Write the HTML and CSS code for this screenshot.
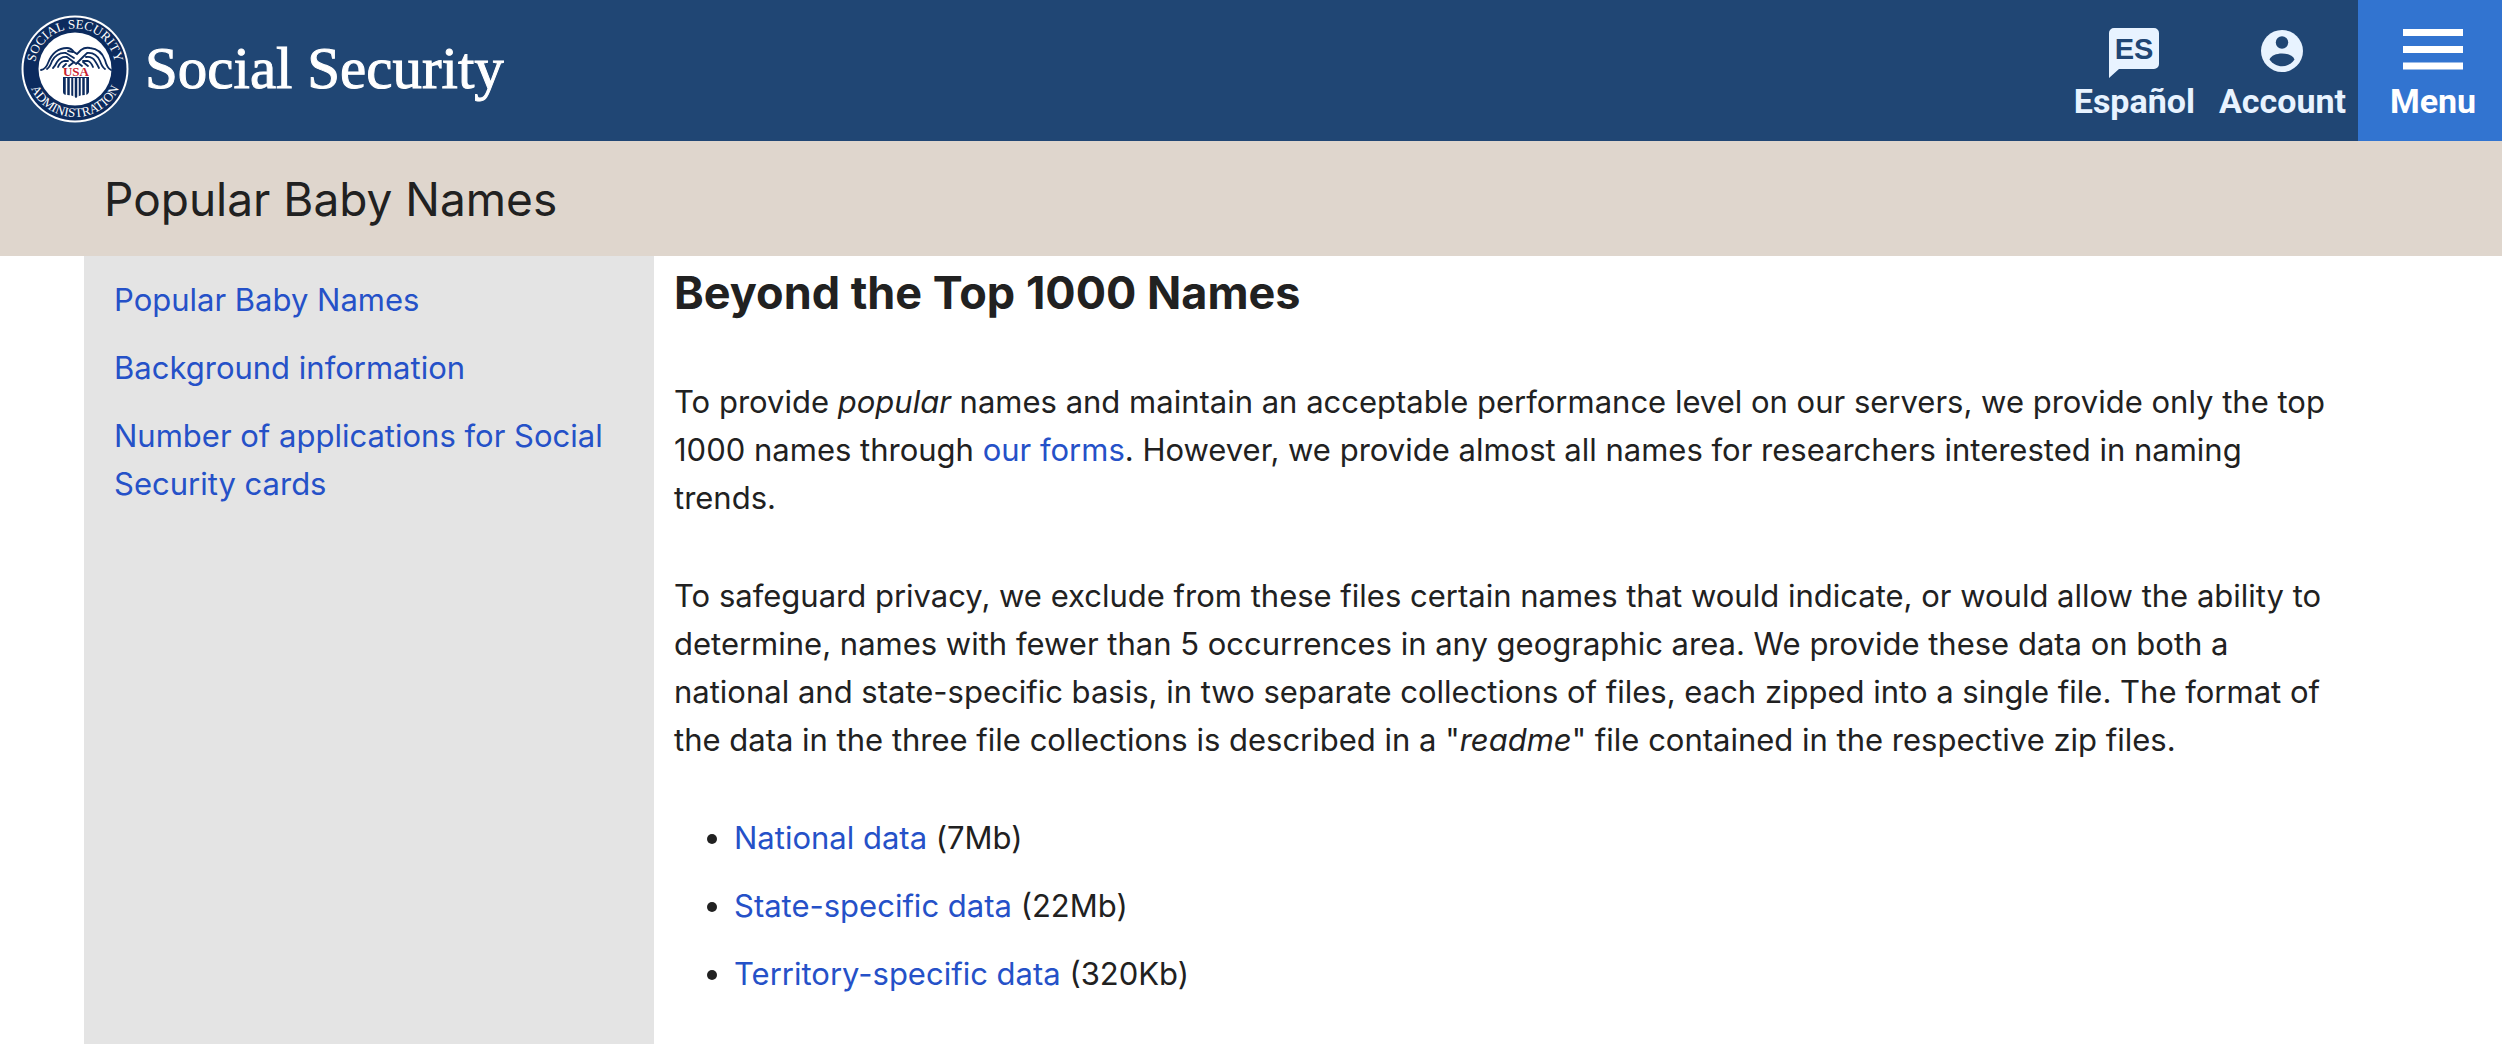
FILE: index.html
```html
<!DOCTYPE html>
<html lang="en">
<head>
<meta charset="utf-8">
<meta name="viewport" content="width=device-width, initial-scale=1">
<title>Beyond the Top 1000 Names</title>
<link rel="stylesheet" href="styles.css">
</head>
<body>
<header class="site-header">
  <a class="brand" href="#">
    <svg class="seal" viewBox="0 0 108 108" role="img" aria-label="Social Security Administration seal">
      <defs>
        <path id="arc-top" d="M13.500 54a40.500 40.500 0 0 1 81 0"/>
        <path id="arc-bottom" d="M6 54a48 48 0 0 0 96 0"/>
      </defs>
      <circle cx="54" cy="54" r="53.500" fill="#fff"/>
      <circle cx="54" cy="54" r="51.500" fill="#0c2b5e"/>
      <circle cx="54" cy="54" r="36.500" fill="#fff"/>
      <text class="seal-text"><textPath href="#arc-top" startOffset="50%" text-anchor="middle">SOCIAL SECURITY</textPath></text>
      <text class="seal-text"><textPath href="#arc-bottom" startOffset="50%" text-anchor="middle">ADMINISTRATION</textPath></text>
      <g fill="none" stroke="#0c2b5e" stroke-width="1.800" stroke-linecap="round">
        <path d="M20 55q5-1 7-7 6-15 19-15 4 0 7 4l3 2 4-4q4-3 9-2 11 1 15 12 2 8 6 10"/>
        <path d="M26 54q3-2 5-8 5-9 14-8l8 5M32 53q2-2 4-6 4-6 10-5l8 6M37 52q2-5 6-6l4 0M42 52l3-3M48 51l5-4"/>
        <path d="M84 54q-3-2-5-8-4-9-13-8l-4 4-7 7M78 53q-2-4-4-7-3-5-9-4M72 52q-2-5-5-6l-5 0M67 51l-5-4M61 51l-4-3"/>
        <path d="M47 36l5 1"/>
      </g>
      <path d="M42 62h26v15q-1 3-4 3-6 0-9 3-3-3-9-3-4 0-4-3z" fill="#0c2b5e"/>
      <path d="M45.500 63v18M49.500 63v18M53 63v20M57 63v20M60.500 63v18M64.500 63v18" stroke="#fff" stroke-width="1.500"/>
      <text class="seal-usa" x="55" y="61" text-anchor="middle">USA</text>
    </svg>
    <span class="brand-name">Social Security</span>
  </a>
  <nav class="tools" aria-label="Site tools">
    <a class="tool" href="#">
      <svg class="tool-icon" viewBox="0 0 50 50" aria-hidden="true">
        <path d="M5 0h40a5 5 0 0 1 5 5v31a5 5 0 0 1-5 5H10l-10 9V5a5 5 0 0 1 5-5z" fill="#e8f3ff"/>
        <text class="lang-code" x="25" y="31" text-anchor="middle">ES</text>
      </svg>
      <span>Español</span>
    </a>
    <a class="tool" href="#">
      <svg class="tool-icon" viewBox="0 0 50 50" aria-hidden="true">
        <circle cx="25" cy="23" r="21" fill="#e8f3ff"/>
        <circle cx="25" cy="14.500" r="6.200" fill="#204674"/>
        <path d="M12.500 31.500c3-8 22-8 25 0-6 9-19 9-25 0z" fill="#204674"/>
      </svg>
      <span>Account</span>
    </a>
    <button class="menu" type="button">
      <svg class="tool-icon menu-icon" viewBox="0 0 60 50" aria-hidden="true">
        <path d="M0 4.500h60M0 21.500h60M0 38h60" stroke="#fff" stroke-width="7"/>
      </svg>
      <span>Menu</span>
    </button>
  </nav>
</header>
<div class="banner"><h1 class="banner-title">Popular Baby Names</h1></div>
<div class="layout">
  <nav class="sidebar" aria-label="Popular Baby Names">
    <ul class="side-list">
      <li><a href="#">Popular Baby Names</a></li>
      <li><a href="#">Background information</a></li>
      <li><a href="#">Number of applications for Social Security cards</a></li>
    </ul>
  </nav>
  <main class="content">
    <h2 class="content-title">Beyond the Top 1000 Names</h2>
    <p>To provide <em>popular</em> names and maintain an acceptable performance level on our servers, we provide only the top 1000 names through <a href="#">our forms</a>. However, we provide almost all names for researchers interested in naming trends.</p>
    <p>To safeguard privacy, we exclude from these files certain names that would indicate, or would allow the ability to determine, names with fewer than 5 occurrences in any geographic area. We provide these data on both a national and state-specific basis, in two separate collections of files, each zipped into a single file. The format of the data in the three file collections is described in a "<em>readme</em>" file contained in the respective zip files.</p>
    <ul class="data-list">
      <li><a href="#">National data</a> (7Mb)</li>
      <li><a href="#">State-specific data</a> (22Mb)</li>
      <li><a href="#">Territory-specific data</a> (320Kb)</li>
    </ul>
  </main>
</div>
</body>
</html>
```
FILE: styles.css
```css
* { box-sizing: border-box; }

body {
  margin: 0;
  min-height: 100vh;
  display: flex;
  flex-direction: column;
  background: #fff;
  color: #212121;
  font-family: Inter, "Liberation Sans", sans-serif;
  font-size: 31px;
  line-height: 48px;
}

a { color: #2551c8; text-decoration: none; }
h1, h2, p, ul { margin: 0; padding: 0; }

.site-header {
  display: flex;
  justify-content: space-between;
  align-items: stretch;
  min-height: 141px;
  padding-left: 21px;
  background: #204674;
}

.brand {
  display: flex;
  align-items: center;
  gap: 16px;
  padding-bottom: 4px;
  color: #fff;
}

.seal { width: 108px; height: 108px; }
.seal-text { fill: #fff; font: 13px "Liberation Serif", serif; }
.seal-usa { fill: #c8202f; font: bold 13px "Liberation Serif", serif; }

.brand-name {
  padding-bottom: 2px;
  font-family: Georgia, "Liberation Serif", serif;
  font-size: 59px;
  line-height: 64px;
  -webkit-text-stroke: 1px #fff;
}

.tools { display: flex; align-items: stretch; }

.tool, .menu {
  display: flex;
  flex-direction: column;
  align-items: center;
  padding: 28px 12px 0;
  color: #e8f3ff;
  font-family: Roboto, "Liberation Sans", sans-serif;
  font-size: 34px;
  font-weight: 700;
  line-height: 46px;
}

.tool-icon { width: 50px; height: 50px; }
.menu-icon { width: 60px; }
.lang-code { fill: #204674; font: bold 29px "Liberation Sans", sans-serif; }

.menu {
  width: 144px;
  padding-left: 18px;
  border: 0;
  background: #3274d0;
  color: #fff;
}

.banner { padding: 29px 104px 27px; background: #dfd6cd; }
.banner-title { font-size: 46px; font-weight: 400; line-height: 59px; }

.layout {
  flex: 1;
  display: grid;
  grid-template-columns: 570px 1fr;
  padding: 0 84px;
}

.sidebar { padding: 20px 30px; background: #e4e4e4; }
.side-list { display: flex; flex-direction: column; gap: 20px; list-style: none; }

.content {
  display: flex;
  flex-direction: column;
  gap: 50px;
  padding: 2px 76px 0 20px;
}

.content-title { font-size: 45px; line-height: 70px; }
.data-list { display: flex; flex-direction: column; gap: 20px; padding-left: 60px; }
```
